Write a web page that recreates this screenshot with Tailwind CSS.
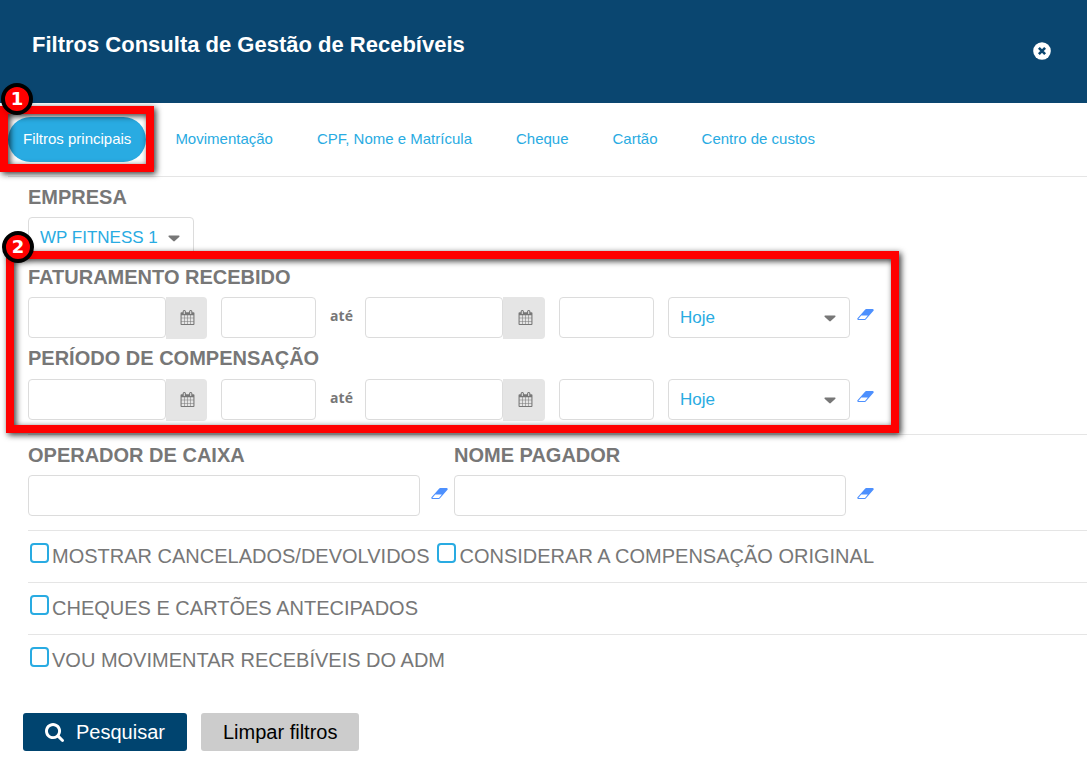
<!DOCTYPE html>
<html lang="pt-BR">
<head>
    <meta charset="UTF-8">
    <meta name="viewport" content="width=device-width, initial-scale=1.0">
    <title>Filtros Consulta de Gestão de Recebíveis</title>
    <!-- Tailwind CSS CDN -->
    <script src="https://cdn.jsdelivr.net/npm/@tailwindcss/browser@4"></script>
</head>
<body class="min-h-screen overflow-x-hidden bg-white font-['Liberation_Sans',Arial,sans-serif] text-[#777]">
    <!-- Shared icons -->
    <svg class="hidden" aria-hidden="true">
        <symbol id="icon-calendar" viewBox="0 0 1792 1792">
            <path d="M192 1664h288v-288h-288v288zM544 1664h320v-288h-320v288zM192 1312h288v-320h-288v320zM544 1312h320v-320h-320v320zM192 928h288v-288h-288v288zM928 1664h320v-288h-320v288zM544 928h320v-288h-320v288zM1312 1664h288v-288h-288v288zM928 1312h320v-320h-320v320zM576 448v-288q0-13-9.5-22.5t-22.5-9.5h-64q-13 0-22.5 9.5t-9.5 22.5v288q0 13 9.5 22.5t22.5 9.5h64q13 0 22.5-9.5t9.5-22.5zM1312 1312h288v-320h-288v320zM928 928h320v-288h-320v288zM1312 928h288v-288h-288v288zM1344 448v-288q0-13-9.5-22.5t-22.5-9.5h-64q-13 0-22.5 9.5t-9.5 22.5v288q0 13 9.5 22.5t22.5 9.5h64q13 0 22.5-9.5t9.5-22.5zM1728 384v1280q0 52-38 90t-90 38h-1408q-52 0-90-38t-38-90v-1280q0-52 38-90t90-38h128v-96q0-66 47-113t113-47h64q66 0 113 47t47 113v96h384v-96q0-66 47-113t113-47h64q66 0 113 47t47 113v96h128q52 0 90 38t38 90z"/>
        </symbol>
        <symbol id="icon-eraser" viewBox="64 256 1920 1280">
            <path d="M960 1408l336-384h-768l-336 384h768zm1013-1077q15 34 9.5 71.5t-30.5 65.5l-896 1024q-38 44-96 44h-768q-38 0-69.5-20.5t-47.5-54.5q-15-34-9.5-71.5t30.5-65.5l896-1024q38-44 96-44h768q38 0 69.5 20.5t47.5 54.5z"/>
        </symbol>
        <symbol id="icon-caret" viewBox="0 0 12 7">
            <path d="M1 .5h10q1 .3.4 1.2L6.8 6q-.8.8-1.6 0L.6 1.700Q0 .8 1 .5z"/>
        </symbol>
    </svg>

    <!-- Header -->
    <header class="flex h-[103px] items-start justify-between bg-[#0a4670] pl-8 pr-9">
        <h1 class="pt-[33px] text-[22px] leading-6 font-bold text-white">Filtros Consulta de Gestão de Recebíveis</h1>
        <button type="button" aria-label="Fechar" class="mt-[42px]">
            <svg class="size-[18px]" viewBox="0 0 18 18">
                <circle cx="9" cy="9" r="8.800" fill="#fff"/>
                <path d="M5.900 5.900l6.200 6.200M12.100 5.900l-6.200 6.200" stroke="#0a4670" stroke-width="2.600"/>
            </svg>
        </button>
    </header>

    <!-- Tabs -->
    <nav class="ml-2 flex gap-[14px] border-b border-[#e5e5e5] py-[14px] text-[15px] leading-[43px] whitespace-nowrap text-[#29abe2]">
        <div class="relative">
            <a href="#" class="block rounded-full bg-[#29abe2] px-[15px] pb-[2px] text-white">Filtros principais</a>
            <!-- Step 1 highlight -->
            <div class="pointer-events-none absolute -inset-x-2 -top-[11px] -bottom-[10px] z-10 border-8 border-[#f00] drop-shadow-[2px_2px_3px_rgba(0,0,0,0.8)]"></div>
            <span class="absolute -top-[34px] -left-[7px] z-20 flex size-8 items-center justify-center rounded-full border-4 border-black bg-[#f00] font-['DejaVu_Sans',sans-serif] text-lg font-bold text-white shadow-md">1</span>
        </div>
        <a href="#" class="px-[15px]">Movimentação</a>
        <a href="#" class="px-[15px]">CPF, Nome e Matrícula</a>
        <a href="#" class="px-[15px]">Cheque</a>
        <a href="#" class="px-[15px]">Cartão</a>
        <a href="#" class="px-[15px]">Centro de custos</a>
    </nav>

    <form class="pl-7">
        <section class="border-b border-[#e5e5e5] pb-[14px]">
            <label for="empresa" class="block h-10 text-xl leading-10 font-bold">EMPRESA</label>
            <div class="relative w-fit">
                <select id="empresa" class="block h-[41px] w-[166px] appearance-none rounded border border-[#dcdcdc] bg-white pl-[11px] text-[17px] text-[#29abe2]">
                    <option>WP FITNESS 1</option>
                </select>
                <svg class="pointer-events-none absolute top-[18px] right-[14px] h-[7px] w-3 fill-[#777]"><use href="#icon-caret"/></svg>
            </div>

            <div class="relative w-fit">
                <fieldset>
                    <legend class="h-[39px] text-xl leading-[38px] font-bold">FATURAMENTO RECEBIDO</legend>
                    <div class="flex h-[41px]">
                        <input type="text" aria-label="Data inicial de faturamento" class="w-[138px] rounded border border-[#dcdcdc] px-3">
                        <button type="button" aria-label="Abrir calendário" class="mr-[14px] flex h-[42px] w-[41px] items-center justify-center rounded-r bg-[#e5e5e5] pb-[2px]">
                            <svg class="ml-[2px] size-[15px] fill-[#777]"><use href="#icon-calendar"/></svg>
                        </button>
                        <input type="text" aria-label="Hora inicial de faturamento" class="w-[95px] rounded border border-[#dcdcdc] px-3">
                        <span class="w-[49px] pl-[2px] text-center font-['Open_Sans',sans-serif] text-sm leading-[38px] font-bold">até</span>
                        <input type="text" aria-label="Data final de faturamento" class="w-[138px] rounded border border-[#dcdcdc] px-3">
                        <button type="button" aria-label="Abrir calendário" class="mr-[14px] flex h-[42px] w-[42px] items-center justify-center rounded-r bg-[#e5e5e5] pb-[2px]">
                            <svg class="ml-[2px] size-[15px] fill-[#777]"><use href="#icon-calendar"/></svg>
                        </button>
                        <input type="text" aria-label="Hora final de faturamento" class="mr-[14px] w-[95px] rounded border border-[#dcdcdc] px-3">
                        <div class="relative">
                            <select aria-label="Período de faturamento" class="block h-[41px] w-[182px] appearance-none rounded border border-[#dcdcdc] bg-white pl-[11px] text-[17px] text-[#29abe2]">
                                <option>Hoje</option>
                            </select>
                            <svg class="pointer-events-none absolute top-[18px] right-[14px] h-[7px] w-3 fill-[#777]"><use href="#icon-caret"/></svg>
                        </div>
                        <button type="button" aria-label="Limpar faturamento" class="ml-[7px] pb-[6px]">
                            <svg class="h-[11px] w-[17px] fill-[#4d90fe]"><use href="#icon-eraser"/></svg>
                        </button>
                    </div>
                </fieldset>

                <fieldset>
                    <legend class="h-[41px] text-xl leading-10 font-bold">PERÍODO DE COMPENSAÇÃO</legend>
                    <div class="flex h-[41px]">
                        <input type="text" aria-label="Data inicial de compensação" class="w-[138px] rounded border border-[#dcdcdc] px-3">
                        <button type="button" aria-label="Abrir calendário" class="mr-[14px] flex h-[42px] w-[41px] items-center justify-center rounded-r bg-[#e5e5e5] pb-[2px]">
                            <svg class="ml-[2px] size-[15px] fill-[#777]"><use href="#icon-calendar"/></svg>
                        </button>
                        <input type="text" aria-label="Hora inicial de compensação" class="w-[95px] rounded border border-[#dcdcdc] px-3">
                        <span class="w-[49px] pl-[2px] text-center font-['Open_Sans',sans-serif] text-sm leading-[38px] font-bold">até</span>
                        <input type="text" aria-label="Data final de compensação" class="w-[138px] rounded border border-[#dcdcdc] px-3">
                        <button type="button" aria-label="Abrir calendário" class="mr-[14px] flex h-[42px] w-[42px] items-center justify-center rounded-r bg-[#e5e5e5] pb-[2px]">
                            <svg class="ml-[2px] size-[15px] fill-[#777]"><use href="#icon-calendar"/></svg>
                        </button>
                        <input type="text" aria-label="Hora final de compensação" class="mr-[14px] w-[95px] rounded border border-[#dcdcdc] px-3">
                        <div class="relative">
                            <select aria-label="Período de compensação" class="block h-[41px] w-[182px] appearance-none rounded border border-[#dcdcdc] bg-white pl-[11px] text-[17px] text-[#29abe2]">
                                <option>Hoje</option>
                            </select>
                            <svg class="pointer-events-none absolute top-[18px] right-[14px] h-[7px] w-3 fill-[#777]"><use href="#icon-caret"/></svg>
                        </div>
                        <button type="button" aria-label="Limpar compensação" class="ml-[7px] pb-[6px]">
                            <svg class="h-[11px] w-[17px] fill-[#4d90fe]"><use href="#icon-eraser"/></svg>
                        </button>
                    </div>
                </fieldset>

                <!-- Step 2 highlight -->
                <div class="pointer-events-none absolute -top-[7px] -right-[25px] -bottom-[13px] -left-[22px] border-8 border-[#f00] drop-shadow-[2px_2px_3px_rgba(0,0,0,0.8)]"></div>
                <span class="absolute -top-[27px] -left-[26px] flex size-8 items-center justify-center rounded-full border-4 border-black bg-[#f00] font-['DejaVu_Sans',sans-serif] text-lg font-bold text-white shadow-md">2</span>
            </div>
        </section>

        <section class="flex border-b border-[#e5e5e5] pb-[14px]">
            <div>
                <label for="operador" class="block text-xl leading-10 font-bold">OPERADOR DE CAIXA</label>
                <div class="flex">
                    <input id="operador" type="text" class="h-[41px] w-[392px] rounded border border-[#dcdcdc] px-3">
                    <button type="button" aria-label="Limpar operador" class="mr-[6px] ml-[11px] pb-[4px]">
                        <svg class="h-[11px] w-[17px] fill-[#4d90fe]"><use href="#icon-eraser"/></svg>
                    </button>
                </div>
            </div>
            <div>
                <label for="pagador" class="block text-xl leading-10 font-bold">NOME PAGADOR</label>
                <div class="flex">
                    <input id="pagador" type="text" class="h-[41px] w-[392px] rounded border border-[#dcdcdc] px-3">
                    <button type="button" aria-label="Limpar pagador" class="ml-[11px] pb-[4px]">
                        <svg class="h-[11px] w-[17px] fill-[#4d90fe]"><use href="#icon-eraser"/></svg>
                    </button>
                </div>
            </div>
        </section>

        <!-- Options -->
        <section class="text-xl leading-[51px] whitespace-nowrap">
            <div class="flex gap-2 border-b border-[#e5e5e5] pl-[2px]">
                <label class="flex gap-[3px]">
                    <input type="checkbox" class="mt-3 h-5 w-[19px] appearance-none rounded border-2 border-[#29abe2] checked:bg-[#29abe2]">
                    MOSTRAR CANCELADOS/DEVOLVIDOS
                </label>
                <label class="flex gap-[3px]">
                    <input type="checkbox" class="mt-3 h-5 w-[19px] appearance-none rounded border-2 border-[#29abe2] checked:bg-[#29abe2]">
                    CONSIDERAR A COMPENSAÇÃO ORIGINAL
                </label>
            </div>
            <div class="flex border-b border-[#e5e5e5] pl-[2px]">
                <label class="flex gap-[3px]">
                    <input type="checkbox" class="mt-3 h-5 w-[19px] appearance-none rounded border-2 border-[#29abe2] checked:bg-[#29abe2]">
                    CHEQUES E CARTÕES ANTECIPADOS
                </label>
            </div>
            <div class="flex pl-[2px]">
                <label class="flex gap-[3px]">
                    <input type="checkbox" class="mt-3 h-5 w-[19px] appearance-none rounded border-2 border-[#29abe2] checked:bg-[#29abe2]">
                    VOU MOVIMENTAR RECEBÍVEIS DO ADM
                </label>
            </div>
        </section>

        <!-- Actions -->
        <div class="-ml-[5px] flex gap-[14px] pt-[27px] pb-6 text-xl">
            <button type="submit" class="flex h-[38px] items-center gap-3 rounded-[3px] bg-[#00446f] px-[22px] text-white">
                <svg class="size-[19px] fill-white" viewBox="64 128 1664 1664">
                    <path d="M1216 832q0-185-131.500-316.500t-316.500-131.500-316.500 131.500-131.500 316.500 131.500 316.500 316.500 131.500 316.500-131.500 131.500-316.500zm512 832q0 52-38 90t-90 38q-54 0-90-38l-343-342q-179 124-399 124-143 0-273.500-55.500t-225-150-150-225-55.500-273.500 55.500-273.500 150-225 225-150 273.500-55.500 273.500 55.500 225 150 150 225 55.500 273.500q0 220-124 399l343 343q37 37 37 90z"/>
                </svg>
                Pesquisar
            </button>
            <button type="reset" class="h-[38px] rounded-[3px] bg-[#ccc] px-[22px] text-black">Limpar filtros</button>
        </div>
    </form>
</body>
</html>
